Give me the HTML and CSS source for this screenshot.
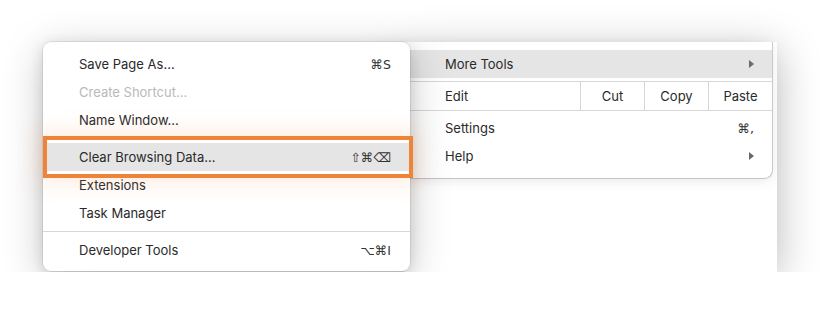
FILE: index.html
```html
<!DOCTYPE html>
<html>
<head>
<meta charset="utf-8">
<link rel="stylesheet" href="styles.css">
</head>
<body>
<div class="scene">
  <div class="menu menu-left">
    <div class="item"><span>Save Page As…</span><span class="key">⌘S</span></div>
    <div class="item disabled"><span>Create Shortcut…</span></div>
    <div class="item"><span>Name Window…</span></div>
    <div class="sep"></div>
    <div class="item active"><span>Clear Browsing Data…</span><span class="key">⇧⌘⌫</span></div>
    <div class="item"><span>Extensions</span></div>
    <div class="item"><span>Task Manager</span></div>
    <div class="sep"></div>
    <div class="item"><span>Developer Tools</span><span class="key">⌥⌘I</span></div>
  </div>
  <div class="page">
    <div class="menu menu-right">
      <div class="item active"><span>More Tools</span><span class="arrow"></span></div>
      <div class="edit-row">
        <span class="edit-label">Edit</span>
        <span class="edit-cell">Cut</span>
        <span class="edit-cell">Copy</span>
        <span class="edit-cell">Paste</span>
      </div>
      <div class="item"><span>Settings</span><span class="key">⌘,</span></div>
      <div class="item"><span>Help</span><span class="arrow"></span></div>
    </div>
  </div>
  <div class="focus-frame"></div>
</div>
</body>
</html>
```

FILE: styles.css
```css
html, body {
  margin: 0;
  padding: 0;
  background: #ffffff;
}

body {
  font-family: "Inter", "DejaVu Sans", sans-serif;
  font-size: 13px;
  color: #2a2a2a;
}

.scene {
  position: relative;
  display: flex;
  align-items: flex-start;
  margin: 42px 0 0 43px;
  width: 734px;
  height: 230px;
}

.menu-left {
  position: relative;
  z-index: 2;
  flex: none;
  width: 367px;
  height: 229px;
  box-sizing: border-box;
  padding: 8px 0 7px;
  margin-right: -5px;
  background: #ffffff;
  border-radius: 8px;
  box-shadow: 0 0 0 0.5px rgba(0, 0, 0, 0.14), 0 3px 14px rgba(0, 0, 0, 0.12), 0 8px 40px rgba(0, 0, 0, 0.22);
}

.page {
  flex: 1;
  height: 230px;
  background: #ffffff;
  box-shadow: 0 8px 40px rgba(0, 0, 0, 0.28);
}

.menu-right {
  width: 367px;
  box-sizing: border-box;
  padding: 8px 0 8px;
  background: #ffffff;
  border-radius: 0 0 8px 0;
  box-shadow: 0.5px 0.5px 0 0.5px rgba(0, 0, 0, 0.18), 0 3px 12px rgba(0, 0, 0, 0.09);
}

.item {
  display: flex;
  align-items: center;
  justify-content: space-between;
  height: 28px;
  padding: 0 19px 0 36px;
}

.menu-right .item {
  padding: 0 18px 0 40px;
}

.item.active {
  background: #e5e5e5;
}

.item.disabled {
  color: #b9b9b9;
}

.key {
  font-family: "DejaVu Sans", sans-serif;
  font-size: 12.5px;
  color: #333333;
}

.arrow {
  width: 0;
  height: 0;
  border-left: 5px solid #6a6a6a;
  border-top: 4px solid transparent;
  border-bottom: 4px solid transparent;
}

.sep {
  height: 1px;
  margin: 4px 0;
  background: #d8d8d8;
}

.edit-row {
  display: flex;
  height: 28px;
  margin: 3px 0;
  border-top: 1px solid #d8d8d8;
  border-bottom: 1px solid #d8d8d8;
}

.edit-label {
  flex: 1;
  display: flex;
  align-items: center;
  padding-left: 40px;
}

.edit-cell {
  width: 63px;
  display: flex;
  align-items: center;
  justify-content: center;
  border-left: 1px solid #d8d8d8;
}

.focus-frame {
  position: absolute;
  z-index: 3;
  left: 0;
  top: 94px;
  width: 370px;
  height: 42px;
  box-sizing: border-box;
  border: 4px solid #ef8338;
  box-shadow: 0 0 22px 4px rgba(242, 140, 70, 0.18);
}
```
